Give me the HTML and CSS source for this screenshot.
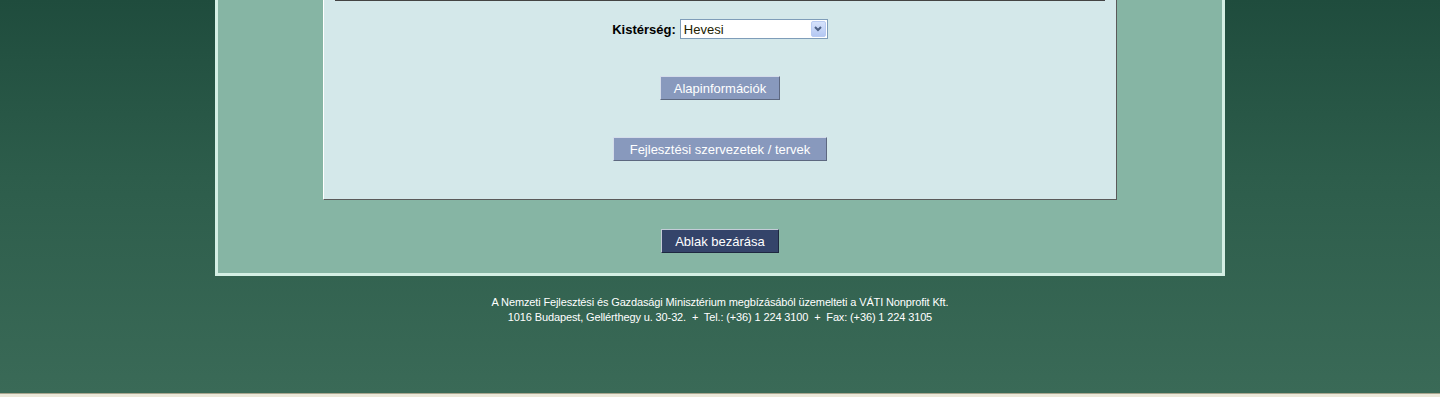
FILE: index.html
```html
<!DOCTYPE html>
<html lang="hu">
<head>
  <meta charset="UTF-8">
  <title>Kistérségi információk</title>
  <link rel="stylesheet" href="styles.css">
</head>
<body>
  <div class="page">
    <div class="frame">
      <div class="panel">
        <div class="rule"></div>
        <div class="field">
          <label for="kisterseg">Kistérség:</label>
          <div class="select-wrap">
            <select id="kisterseg">
              <option>Hevesi</option>
            </select>
            <span class="arrow">
              <svg width="8" height="6" viewBox="0 0 8 6"><path d="M1 1 L4 4 L7 1" fill="none" stroke="#4d6185" stroke-width="2"/></svg>
            </span>
          </div>
        </div>
        <button class="btn btn-info">Alapinformációk</button>
        <button class="btn btn-plans">Fejlesztési szervezetek / tervek</button>
      </div>
      <button class="btn-close">Ablak bezárása</button>
    </div>
    <div class="footer">
      A Nemzeti Fejlesztési és Gazdasági Minisztérium megbízásából üzemelteti a VÁTI Nonprofit Kft.<br>
      1016 Budapest, Gellérthegy u. 30-32.&nbsp; +&nbsp; Tel.: (+36) 1 224 3100&nbsp; +&nbsp; Fax: (+36) 1 224 3105
    </div>
  </div>
  <div class="bottom-strip"></div>
</body>
</html>
```

FILE: styles.css
```css
* { box-sizing: border-box; }
body {
  margin: 0;
  font-family: "Liberation Sans", Arial, sans-serif;
  background: #ebe8da;
}
.page {
  height: 393px;
  background: linear-gradient(to bottom, #1f4c3d 0%, #2d5d4b 45%, #3a6a57 100%);
  display: flex;
  flex-direction: column;
  align-items: center;
}
.frame {
  width: 1010px;
  background: #86b5a4;
  border: 3px solid #d4efe4;
  border-top: none;
  padding: 0 105px 20px;
  display: flex;
  flex-direction: column;
  align-items: center;
}
.panel {
  width: 794px;
  height: 200px;
  background: #d4e8ea;
  border-left: 1px solid #ffffff;
  border-right: 1px solid #5a5a5a;
  border-bottom: 1px solid #5a5a5a;
  display: flex;
  flex-direction: column;
  align-items: center;
}
.rule {
  align-self: stretch;
  margin: 0 11px;
  height: 1px;
  background: #444;
}
.field {
  margin-top: 18px;
  display: flex;
  align-items: center;
  gap: 4px;
}
.field label {
  font-weight: bold;
  font-size: 13px;
  color: #000;
}
.select-wrap {
  position: relative;
}
.select-wrap select {
  appearance: none;
  width: 148px;
  height: 20px;
  border: 1px solid #7f9db9;
  background: #fff;
  font-family: "Liberation Sans", Arial, sans-serif;
  font-size: 13px;
  color: #222200;
  padding: 0 0 0 3px;
  border-radius: 0;
  display: block;
}
.arrow {
  position: absolute;
  top: 2px;
  right: 2px;
  width: 15px;
  height: 16px;
  background: linear-gradient(to bottom, #d6e2fb, #b4c8f3);
  border: 1px solid #b9cbf2;
  border-radius: 2px;
  display: flex;
  align-items: center;
  justify-content: center;
}
.btn {
  height: 24px;
  background: #8899bd;
  color: #fff;
  font-family: "Liberation Sans", Arial, sans-serif;
  font-size: 13px;
  border-top: 1px solid #d4dcea;
  border-left: 1px solid #d4dcea;
  border-right: 1px solid #5d6880;
  border-bottom: 1px solid #5d6880;
  padding: 0;
}
.btn-info {
  width: 120px;
  margin-top: 37px;
}
.btn-plans {
  width: 214px;
  margin-top: 37px;
}
.btn-close {
  width: 118px;
  height: 24px;
  margin-top: 29px;
  background: #34446a;
  color: #fff;
  font-family: "Liberation Sans", Arial, sans-serif;
  font-size: 13px;
  border-top: 1px solid #c4ccd8;
  border-left: 1px solid #c4ccd8;
  border-right: 1px solid #1e2840;
  border-bottom: 1px solid #1e2840;
  padding: 0;
}
.footer {
  margin-top: 19px;
  color: #fff;
  font-size: 11px;
  letter-spacing: -0.13px;
  line-height: 15px;
  text-align: center;
}
.bottom-strip {
  height: 4px;
  border-top: 1px solid #a9a68f;
  background: #ebe8da;
}
```
